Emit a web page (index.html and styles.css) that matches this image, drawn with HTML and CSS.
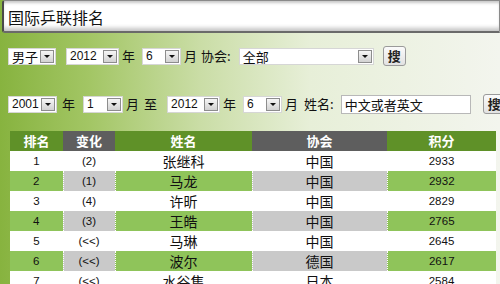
FILE: index.html
```html
<!DOCTYPE html>
<html>
<head>
<meta charset="utf-8">
<link rel="stylesheet" href="styles.css">
</head>
<body>
<div class="titlebar"><span class="title">国际乒联排名</span></div>
<div class="page">
  <div class="row row1">
    <span class="sel w48"><span class="v">男子</span><span class="arr"></span></span>
    <span class="sel w53 ml10"><span class="v num">2012</span><span class="arr"></span></span>
    <span class="lbl ml3">年</span>
    <span class="sel w39 ml7"><span class="v num">6</span><span class="arr"></span></span>
    <span class="lbl ml3">月</span>
    <span class="lbl ml4">协会:</span>
    <span class="sel w135 ml8"><span class="v">全部</span><span class="arr"></span></span>
    <button class="btn ml9">搜</button>
  </div>
  <div class="row row2">
    <span class="sel w49"><span class="v num">2001</span><span class="arr"></span></span>
    <span class="lbl ml5">年</span>
    <span class="sel w40 ml8"><span class="v num">1</span><span class="arr"></span></span>
    <span class="lbl ml3">月</span>
    <span class="lbl ml5">至</span>
    <span class="sel w53 ml10"><span class="v num">2012</span><span class="arr"></span></span>
    <span class="lbl ml3">年</span>
    <span class="sel w39 ml7"><span class="v num">6</span><span class="arr"></span></span>
    <span class="lbl ml3">月</span>
    <span class="lbl ml6">姓名:</span>
    <span class="inp ml7">中文或者英文</span>
    <button class="btn ml12">搜</button>
  </div>
  <table class="rank">
    <colgroup>
      <col class="c1"><col class="c2"><col class="c3"><col class="c4"><col class="c5">
    </colgroup>
    <thead>
      <tr><th class="g">排名</th><th class="d">变化</th><th class="g">姓名</th><th class="d">协会</th><th class="g">积分</th></tr>
    </thead>
    <tbody>
      <tr><td class="n">1</td><td class="n">(2)</td><td>张继科</td><td>中国</td><td class="n">2933</td></tr>
      <tr class="band"><td class="n">2</td><td class="n">(1)</td><td>马龙</td><td>中国</td><td class="n">2932</td></tr>
      <tr><td class="n">3</td><td class="n">(4)</td><td>许昕</td><td>中国</td><td class="n">2829</td></tr>
      <tr class="band"><td class="n">4</td><td class="n">(3)</td><td>王皓</td><td>中国</td><td class="n">2765</td></tr>
      <tr><td class="n">5</td><td class="n">(&lt;&lt;)</td><td>马琳</td><td>中国</td><td class="n">2645</td></tr>
      <tr class="band"><td class="n">6</td><td class="n">(&lt;&lt;)</td><td>波尔</td><td>德国</td><td class="n">2617</td></tr>
      <tr><td class="n">7</td><td class="n">(&lt;&lt;)</td><td>水谷隼</td><td>日本</td><td class="n">2584</td></tr>
    </tbody>
  </table>
</div>
</body>
</html>
```

FILE: styles.css
```css
html, body {
  margin: 0;
  padding: 0;
}
body {
  width: 500px;
  height: 284px;
  overflow: hidden;
  font-family: "Liberation Sans", "Noto Sans CJK SC", sans-serif;
  color: #111;
  background:
    linear-gradient(to right, #87b33f 0%, #a3c665 18%, #cadda6 40%, #e7efd8 62%, #f3f5ee 100%);
}
.titlebar {
  height: 30px;
  margin-left: 2px;
  background: #fff;
  border: 1px solid #8a8a8a;
  border-left: 2px solid #4a4a4a;
  border-bottom: 2px solid #6a6a6a;
  border-radius: 3px 0 0 3px;
  box-shadow: inset 0 -5px 4px -2px #c4c4c4, inset 0 4px 3px -2px #c8c8c8;
  display: flex;
  align-items: center;
}
.title {
  font-family: "Noto Sans CJK SC", sans-serif;
  font-size: 16px;
  margin-left: 4px;
  margin-top: 1px;
  color: #111;
}
.page {
  padding-top: 13px;
}
.row {
  display: flex;
  align-items: center;
  height: 20px;
  padding-left: 8px;
  font-size: 13px;
  white-space: nowrap;
}
.row > * {
  flex-shrink: 0;
}
.row2 {
  margin-top: 28px;
}
.lbl {
  font-family: "Noto Sans CJK SC", sans-serif;
  font-size: 13px;
  line-height: 18px;
}
.sel {
  display: inline-flex;
  align-items: center;
  height: 17px;
  background: #fff;
  border: 1px solid #d6d6d6;
  box-sizing: border-box;
}
.sel .v {
  flex: 1;
  padding-left: 3px;
  font-family: "Noto Sans CJK SC", sans-serif;
  font-size: 13px;
  line-height: 15px;
}
.sel .v.num {
  font-family: "Liberation Sans", sans-serif;
  font-size: 12px;
  padding-left: 3px;
}
.sel .arr {
  flex-shrink: 0;
  width: 14px;
  height: 13px;
  margin-right: 1px;
  border: 1px solid #8d8d8d;
  background: linear-gradient(#f6f6f6, #d2d2d2);
  display: flex;
  align-items: center;
  justify-content: center;
  box-sizing: border-box;
}
.sel .arr::after {
  content: "";
  width: 0;
  height: 0;
  border-left: 3px solid transparent;
  border-right: 3px solid transparent;
  border-top: 3px solid #111;
}
.w48 { width: 48px; }
.w49 { width: 49px; }
.w53 { width: 53px; }
.w39 { width: 39px; }
.w40 { width: 40px; }
.w135 { width: 135px; }
.ml3 { margin-left: 3px; }
.ml4 { margin-left: 4px; }
.ml5 { margin-left: 5px; }
.ml6 { margin-left: 6px; }
.ml7 { margin-left: 7px; }
.ml8 { margin-left: 8px; }
.ml9 { margin-left: 9px; }
.ml10 { margin-left: 10px; }
.ml12 { margin-left: 12px; }
.inp {
  width: 130px;
  height: 19px;
  box-sizing: border-box;
  background: #fff;
  border: 1px solid #b8b8b8;
  font-family: "Noto Sans CJK SC", sans-serif;
  font-size: 13px;
  line-height: 17px;
  padding-left: 3px;
}
.btn {
  width: 23px;
  height: 20px;
  padding: 0;
  border: 1px solid #9a9a9a;
  border-radius: 3px;
  background: linear-gradient(#fbfbfb, #e2e2e2);
  font-family: "Noto Sans CJK SC", sans-serif;
  font-size: 13px;
  font-weight: bold;
  color: #222;
  line-height: 18px;
}
.rank {
  margin-top: 17px;
  margin-left: 10px;
  width: 486px;
  border-collapse: collapse;
  table-layout: fixed;
  background: #fff;
}
.c1 { width: 53px; }
.c2 { width: 52px; }
.c3 { width: 137px; }
.c4 { width: 135px; }
.c5 { width: 109px; }
.rank th {
  height: 20px;
  padding: 0;
  color: #fff;
  font-family: "Noto Sans CJK SC", sans-serif;
  font-size: 13px;
  font-weight: bold;
  text-align: center;
  line-height: 20px;
}
.rank th.g { background: #5f9128; }
.rank th.d { background: #5e5e5e; }
.rank td {
  height: 20px;
  padding: 0;
  text-align: center;
  font-family: "Noto Sans CJK SC", sans-serif;
  font-size: 14px;
  line-height: 20px;
  color: #111;
}
.rank td.n {
  font-family: "Liberation Sans", sans-serif;
  font-size: 11.5px;
}
.rank tr.band td {
  background: #8fc45a;
  border-left: 1px dotted #fff;
}
.rank tr.band td:nth-child(2),
.rank tr.band td:nth-child(4) {
  background: #c9c9c9;
}
.rank tr.band td:first-child {
  border-left: none;
}
```
